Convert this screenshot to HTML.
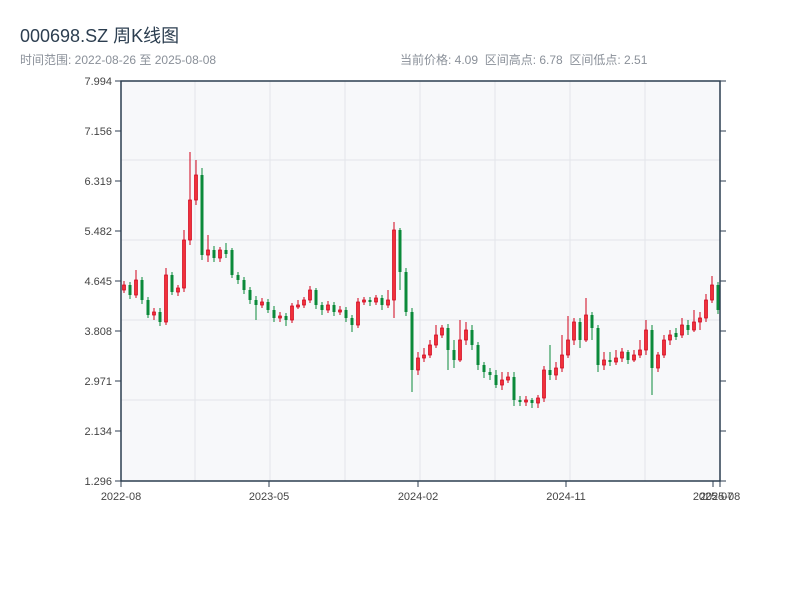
<!DOCTYPE html>
<html><head><meta charset="utf-8"><style>
body{margin:0;background:#fff;width:800px;height:600px;overflow:hidden;font-family:"Liberation Sans","Noto Sans CJK SC",sans-serif}
.t{position:absolute;left:20px;top:22px;font-size:18px;color:#2c3e50}
.s{position:absolute;top:51px;font-size:12px;color:#8a9099}
svg{position:absolute;left:0;top:0}
</style></head><body>
<div class="t">000698.SZ 周K线图</div>
<div class="s" style="left:20px">时间范围: 2022-08-26 至 2025-08-08</div>
<div class="s" style="left:400px">当前价格: 4.09 &nbsp;区间高点: 6.78 &nbsp;区间低点: 2.51</div>
<svg width="800" height="600" font-family="Liberation Sans, sans-serif" font-size="11" fill="#444">
<rect x="121" y="81" width="599" height="400" fill="#f7f8fa"/>
<path d="M121 160H720M121 240H720M121 320H720M121 400H720M195 81V481M270 81V481M345 81V481M420 81V481M495 81V481M570 81V481M645 81V481" stroke="#e3e5ea" stroke-width="1"/>
<path d="M115 81H121M115 131H121M115 181H121M115 231H121M115 281H121M115 331H121M115 381H121M115 431H121M115 481H121M720 81H726M720 131H726M720 181H726M720 231H726M720 281H726M720 331H726M720 381H726M720 431H726M720 481H726M121 481V487M269 481V487M418 481V487M566 481V487M713 481V487M720 481V487" stroke="#2c3e50" stroke-width="1"/>
<g text-anchor="end">
<text x="112" y="85">7.994</text><text x="112" y="135">7.156</text><text x="112" y="185">6.319</text><text x="112" y="235">5.482</text><text x="112" y="285">4.645</text><text x="112" y="335">3.808</text><text x="112" y="385">2.971</text><text x="112" y="435">2.134</text><text x="112" y="485">1.296</text>
</g>
<g text-anchor="middle">
<text x="121" y="500">2022-08</text><text x="269" y="500">2023-05</text><text x="418" y="500">2024-02</text><text x="566" y="500">2024-11</text><text x="713" y="500">2025-07</text><text x="720" y="500">2025-08</text>
</g>
<path stroke="#d0021b" stroke-width="1" d="M124 281V293M136 270V298M154 308V320M166 268V325M178 285V296M184 230V292M190 152V245M196 160V205M208 235V262M220 247V262M262 298V308M280 312V322M292 303V323M298 300V309M304 297V308M310 286V303M328 301V313M340 306V315M358 298V328M364 297V305M376 295V305M388 290V308M394 222V318M418 352V375M424 348V362M430 340V358M436 325V348M442 325V338M460 320V362M466 322V345M502 372V390M508 372V383M526 396V406M538 395V408M544 366V402M556 362V380M562 335V372M568 316V358M574 318V345M586 298V342M604 352V370M616 350V365M622 348V362M634 350V362M640 340V358M646 320V355M658 352V372M664 335V358M670 330V345M682 318V338M694 310V332M700 312V330M706 294V322M712 276V303"/>
<path fill="#f0313a" stroke="#d0021b" stroke-width="0.7" d="M122.5 285H125.5V290H122.5ZM134.5 280H137.5V295H134.5ZM152.5 312H155.5V315H152.5ZM164.5 275H167.5V322H164.5ZM176.5 288H179.5V292H176.5ZM182.5 240H185.5V288H182.5ZM188.5 200H191.5V240H188.5ZM194.5 175H197.5V200H194.5ZM206.5 250H209.5V255H206.5ZM218.5 250H221.5V258H218.5ZM260.5 302H263.5V305H260.5ZM278.5 316H281.5V318H278.5ZM290.5 306H293.5V320H290.5ZM296.5 305H299.5V307H296.5ZM302.5 300H305.5V305H302.5ZM308.5 290H311.5V300H308.5ZM326.5 305H329.5V310H326.5ZM338.5 310H341.5V312H338.5ZM356.5 302H359.5V325H356.5ZM362.5 300H365.5V302H362.5ZM374.5 298H377.5V302H374.5ZM386.5 300H389.5V305H386.5ZM392.5 230H395.5V300H392.5ZM416.5 358H419.5V370H416.5ZM422.5 355H425.5V358H422.5ZM428.5 345H431.5V355H428.5ZM434.5 335H437.5V345H434.5ZM440.5 328H443.5V335H440.5ZM458.5 340H461.5V360H458.5ZM464.5 330H467.5V340H464.5ZM500.5 380H503.5V385H500.5ZM506.5 377H509.5V380H506.5ZM524.5 400H527.5V402H524.5ZM536.5 398H539.5V403H536.5ZM542.5 370H545.5V398H542.5ZM554.5 368H557.5V375H554.5ZM560.5 355H563.5V368H560.5ZM566.5 340H569.5V355H566.5ZM572.5 322H575.5V340H572.5ZM584.5 315H587.5V340H584.5ZM602.5 360H605.5V365H602.5ZM614.5 358H617.5V362H614.5ZM620.5 352H623.5V358H620.5ZM632.5 355H635.5V360H632.5ZM638.5 350H641.5V355H638.5ZM644.5 330H647.5V350H644.5ZM656.5 355H659.5V368H656.5ZM662.5 340H665.5V355H662.5ZM668.5 335H671.5V340H668.5ZM680.5 325H683.5V335H680.5ZM692.5 322H695.5V330H692.5ZM698.5 318H701.5V322H698.5ZM704.5 300H707.5V318H704.5ZM710.5 285H713.5V300H710.5Z"/>
<path stroke="#0b8a3a" stroke-width="1" d="M130 282V299M142 277V304M148 297V318M160 308V326M172 272V295M202 168V260M214 246V262M226 243V258M232 248V278M238 272V284M244 277V294M250 287V304M256 296V320M268 299V313M274 306V322M286 313V326M316 288V309M322 302V315M334 302V316M346 307V322M352 315V332M370 297V306M382 295V310M400 228V290M406 268V316M412 308V392M448 324V370M454 340V368M472 325V350M478 342V370M484 362V378M490 368V380M496 370V388M514 372V406M520 396V406M532 398V408M550 345V380M580 318V348M592 312V340M598 325V372M610 352V366M628 350V364M652 325V395M676 328V340M688 320V335M718 282V314"/>
<path fill="#0b8a3a" d="M128.5 285H131.5V295H128.5ZM140.5 280H143.5V300H140.5ZM146.5 300H149.5V315H146.5ZM158.5 312H161.5V322H158.5ZM170.5 275H173.5V292H170.5ZM200.5 175H203.5V255H200.5ZM212.5 250H215.5V258H212.5ZM224.5 250H227.5V254H224.5ZM230.5 250H233.5V275H230.5ZM236.5 275H239.5V280H236.5ZM242.5 280H245.5V290H242.5ZM248.5 290H251.5V300H248.5ZM254.5 300H257.5V305H254.5ZM266.5 302H269.5V310H266.5ZM272.5 310H275.5V318H272.5ZM284.5 316H287.5V320H284.5ZM314.5 290H317.5V305H314.5ZM320.5 305H323.5V310H320.5ZM332.5 305H335.5V312H332.5ZM344.5 310H347.5V318H344.5ZM350.5 318H353.5V325H350.5ZM368.5 300H371.5V302H368.5ZM380.5 298H383.5V305H380.5ZM398.5 230H401.5V272H398.5ZM404.5 272H407.5V312H404.5ZM410.5 312H413.5V370H410.5ZM446.5 328H449.5V350H446.5ZM452.5 350H455.5V360H452.5ZM470.5 330H473.5V345H470.5ZM476.5 345H479.5V365H476.5ZM482.5 365H485.5V372H482.5ZM488.5 372H491.5V375H488.5ZM494.5 375H497.5V385H494.5ZM512.5 377H515.5V400H512.5ZM518.5 400H521.5V402H518.5ZM530.5 400H533.5V403H530.5ZM548.5 370H551.5V375H548.5ZM578.5 322H581.5V340H578.5ZM590.5 315H593.5V328H590.5ZM596.5 328H599.5V365H596.5ZM608.5 360H611.5V362H608.5ZM626.5 352H629.5V360H626.5ZM650.5 330H653.5V368H650.5ZM674.5 333H677.5V337H674.5ZM686.5 325H689.5V330H686.5ZM716.5 285H719.5V310H716.5Z"/>
<rect x="121" y="81" width="599" height="400" fill="none" stroke="#2c3e50" stroke-width="1.5"/>
</svg>
</body></html>
